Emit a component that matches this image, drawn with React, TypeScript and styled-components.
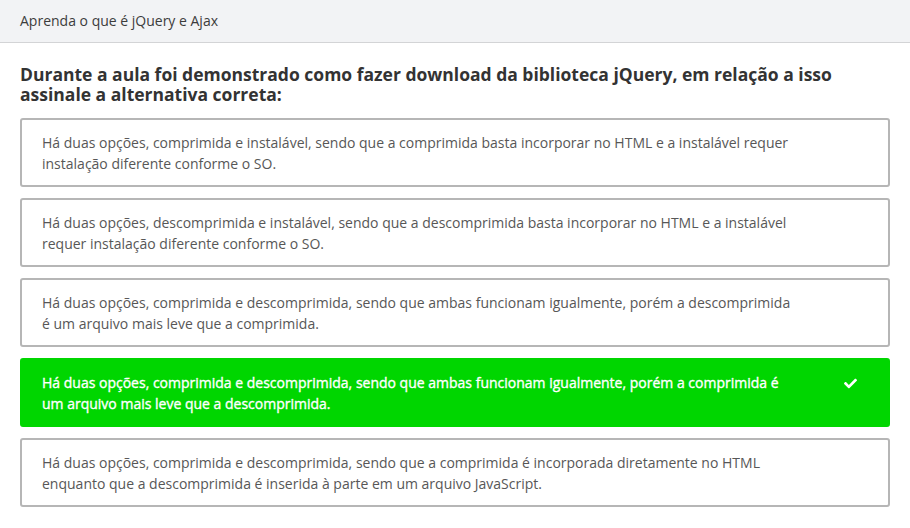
import React from "react";
import styled, { createGlobalStyle } from "styled-components";
import { FaCheck } from "react-icons/fa";

const Global = createGlobalStyle`
  html, body { margin: 0; padding: 0; background: #fff; }
  body { font-family: "Open Sans", "Noto Sans", sans-serif; }
  * { box-sizing: border-box; }
`;

const Page = styled.div`
  width: 910px;
  min-height: 528px;
  background: #fff;
`;

const TopBar = styled.header`
  height: 43px;
  background: #f2f3f5;
  border-bottom: 1px solid #d3d4d6;
  display: flex;
  align-items: center;
  padding: 0 20px 1px;
  font-size: 14px;
  color: #3c3c3c;
`;

const Content = styled.main`
  padding: 21px 20px 20px;
`;

const Question = styled.h1`
  margin: 0 0 14px;
  font-size: 17.5px;
  line-height: 20px;
  font-weight: 700;
  color: #333;
  max-width: 830px;
`;

const Options = styled.ul`
  list-style: none;
  margin: 0;
  padding: 0;
  display: flex;
  flex-direction: column;
  gap: 11px;
`;

const Option = styled.li<{ $correct?: boolean }>`
  display: flex;
  align-items: center;
  width: 870px;
  min-height: 69px;
  padding: 12px 31px 11px 20px;
  border-radius: 3px;
  border: 2px solid ${(p) => (p.$correct ? "#00d600" : "#b6b6b6")};
  background: ${(p) => (p.$correct ? "#00d600" : "#fff")};
  color: ${(p) => (p.$correct ? "#fff" : "#575757")};
  font-size: 14px;
  line-height: 21px;
  font-weight: ${(p) => (p.$correct ? 500 : 400)};
  -webkit-text-stroke: ${(p) => (p.$correct ? "0.35px #fff" : "0")};
`;

const OptionText = styled.span`
  width: 757px;
`;

const Check = styled.span`
  margin-left: auto;
  align-self: flex-start;
  height: 23px;
  display: flex;
  align-items: center;
  color: #fff;
  font-size: 13px;
`;

const options = [
  "Há duas opções, comprimida e instalável, sendo que a comprimida basta incorporar no HTML e a instalável requer instalação diferente conforme o SO.",
  "Há duas opções, descomprimida e instalável, sendo que a descomprimida basta incorporar no HTML e a instalável requer instalação diferente conforme o SO.",
  "Há duas opções, comprimida e descomprimida, sendo que ambas funcionam igualmente, porém a descomprimida é um arquivo mais leve que a comprimida.",
  "Há duas opções, comprimida e descomprimida, sendo que ambas funcionam igualmente, porém a comprimida é um arquivo mais leve que a descomprimida.",
  "Há duas opções, comprimida e descomprimida, sendo que a comprimida é incorporada diretamente no HTML enquanto que a descomprimida é inserida à parte em um arquivo JavaScript.",
];

export default function App() {
  return (
    <Page>
      <Global />
      <TopBar>Aprenda o que é jQuery e Ajax</TopBar>
      <Content>
        <Question>
          Durante a aula foi demonstrado como fazer download da biblioteca jQuery, em relação a isso assinale a alternativa correta:
        </Question>
        <Options>
          {options.map((text, i) => (
            <Option key={i} $correct={i === 3}>
              <OptionText>{text}</OptionText>
              {i === 3 && (
                <Check>
                  <FaCheck />
                </Check>
              )}
            </Option>
          ))}
        </Options>
      </Content>
    </Page>
  );
}
